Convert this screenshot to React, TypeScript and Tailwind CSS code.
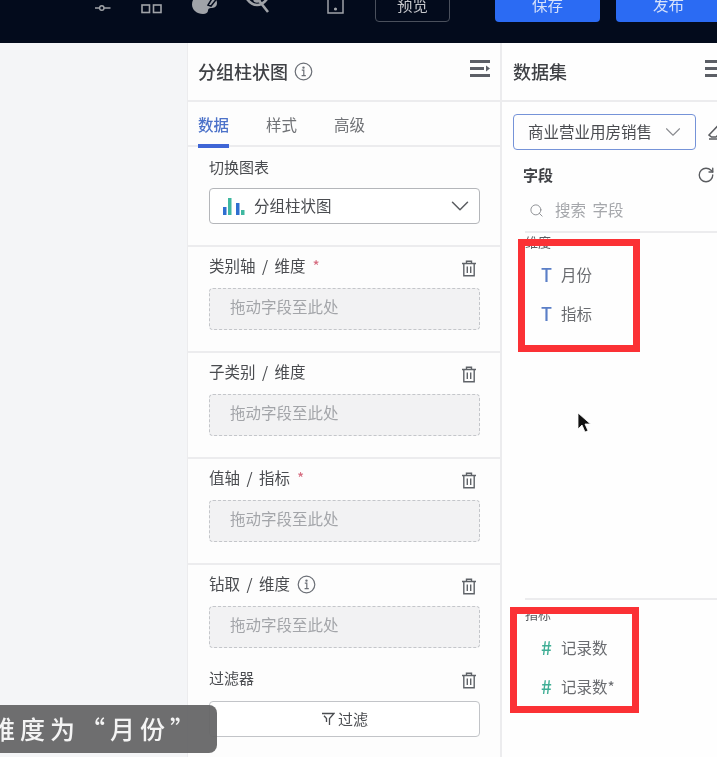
import { ChevronDown, RotateCw, Search } from "lucide-react"

function InfoIcon() {
  return (
    <svg width="19" height="19" viewBox="0 0 19 19" fill="none" stroke="#6b6f76" strokeWidth="1.2">
      <circle cx="9.5" cy="9.5" r="8.3" />
      <path d="M7.8 8.2h2v5.4M7.6 13.6h4.2" />
      <circle cx="9.5" cy="5.6" r="0.6" fill="#6b6f76" />
    </svg>
  )
}

function TrashIcon() {
  return (
    <svg className="mt-[4px]" width="16" height="17" viewBox="0 0 16 17" fill="none" stroke="#5f6368" strokeWidth="1.4">
      <path d="M1 3.5h14M5.5 3.5V1.2h5v2.3M2.8 3.5v12.3h10.4V3.5M6.3 6.5v6.5M9.7 6.5v6.5" />
    </svg>
  )
}

function CollapseIcon() {
  return (
    <svg width="21" height="18" viewBox="0 0 21 18" fill="#5c5f66" className="shrink-0">
      <rect x="0" y="0" width="20" height="3" />
      <rect x="0" y="7" width="14" height="3" />
      <path d="M16 5.5l4 3-4 3z" />
      <rect x="0" y="14" width="20" height="3" />
    </svg>
  )
}

function DropZone() {
  return (
    <div className="flex h-[42px] items-center rounded border border-dashed border-[#c4c6ca] bg-[#f2f2f3] pb-[4px] pl-5 text-[15.5px] text-[#a3a5a9]">
      拖动字段至此处
    </div>
  )
}

function SlotSection({ label, extra, last }: { label: string; extra?: React.ReactNode; last?: boolean }) {
  return (
    <section
      className={
        last
          ? "h-[99px] pl-[21px] pr-[20px] pt-[6px]"
          : "h-[106px] border-b-2 border-[#ececee] pl-[21px] pr-[20px] pt-[6px]"
      }
    >
      <div className="mb-[9px] flex h-[26px] items-center justify-between pr-[3px] text-[15.5px] text-[#4a4c50] [word-spacing:3px]">
        <div className="flex items-center gap-[7px]">
          <span>{label}</span>
          {extra}
        </div>
        <TrashIcon />
      </div>
      <DropZone />
    </section>
  )
}

const star = <span className="text-[#d56a7e]">*</span>

function FieldRow({ kind, name }: { kind: "T" | "#"; name: string }) {
  return (
    <div className="flex h-[39px] items-center gap-[8px] pl-[15px] text-[15.5px] text-[#6a6c70]">
      <span
        className={
          kind === "T"
            ? "w-[13px] text-center text-[18px] font-medium text-[#5b7fc7]"
            : "w-[13px] text-center text-[19px] font-medium text-[#3fae95]"
        }
      >
        {kind}
      </span>
      <span>{name}</span>
    </div>
  )
}

export default function App() {
  return (
    <div
      className="relative h-[757px] w-[717px] overflow-hidden bg-white text-[#3f4145] blur-[0.5px]"
      style={{ fontFamily: '"Noto Sans CJK SC", "Noto Sans", sans-serif' }}
    >
      {/* top bar, the frame cuts it off at the top */}
      <header className="flex h-[43px] items-start overflow-hidden bg-[#030b1c]">
        <div className="ml-[95px] mt-[-6px] flex items-end text-[#a0a3a8]">
          <svg width="16" height="18" viewBox="0 0 16 18" fill="none" stroke="currentColor" strokeWidth="1.4">
            <path d="M0 12h4.5M9 12h6.5" />
            <circle cx="6.8" cy="12" r="2.2" />
          </svg>
          <svg className="ml-[30px]" width="22" height="18" viewBox="0 0 22 18" fill="none" stroke="currentColor" strokeWidth="1.6">
            <rect x="1" y="9" width="7.5" height="7.5" />
            <rect x="12.5" y="9" width="7.5" height="7.5" />
          </svg>
          <svg className="ml-[29px]" width="28" height="19" viewBox="0 0 28 19" fill="currentColor">
            <path d="M12 0c8 0 13 3 13 8 0 4-3 5-6 5-2 0-3 1-3 2.400 0 2-2 3.600-5 3.600C5 19 0 15 0 9.500 0 3 5 0 12 0z" />
            <path d="M21 2l6-3v2l-8 10-3-1z" stroke="#030b1c" strokeWidth="1.500" />
          </svg>
          <svg className="ml-[26px]" width="24" height="20" viewBox="0 0 24 20" fill="none" stroke="currentColor" strokeWidth="2.600">
            <path d="M1 5c3-4 6-6 10-6s7 3 10 6c-3 4-6 6-10 6S4 9 1 5z" />
            <circle cx="11" cy="5" r="2.500" fill="currentColor" />
            <path d="M7-1l15 19" />
          </svg>
          <svg className="ml-[57px]" width="17" height="18" viewBox="0 0 17 18" fill="none" stroke="currentColor" strokeWidth="1.500">
            <path d="M1 0v17h15V0" />
            <circle cx="8.500" cy="13" r="0.800" fill="currentColor" />
          </svg>
        </div>
        <div className="ml-[31px] mt-[-13px] flex">
          <button className="flex h-[35px] w-[75px] items-center justify-center rounded border border-[#4a505c] pt-[1px] text-[15.5px] text-[#c6c8cc]">
            预览
          </button>
          <button className="ml-[45px] flex h-[35px] w-[105px] items-center justify-center rounded bg-[#2b6bf3] pt-[1px] text-[15.5px] text-[#d5e1fb]">
            保存
          </button>
          <button className="ml-[16px] flex h-[35px] w-[105px] items-center justify-center rounded bg-[#2b6bf3] pt-[1px] text-[15.5px] text-[#d5e1fb]">
            发布
          </button>
        </div>
      </header>

      <div className="flex h-[714px]">
        <div className="w-[187px] shrink-0 bg-[#f4f5f7]" />

        {/* chart config */}
        <aside className="w-[315px] shrink-0 border-l border-r-2 border-[#ececee] bg-[#fdfdfd]">
          <div className="flex h-[59px] items-center justify-between border-b-2 border-[#ececee] pl-[10px] pr-[9px]">
            <div className="flex items-center gap-[6px] text-[18px] font-medium text-[#3f4145]">
              分组柱状图
              <InfoIcon />
            </div>
            <div className="mb-[5px]">
              <CollapseIcon />
            </div>
          </div>
          <div className="flex h-[45px] items-start gap-[37px] border-b-2 border-[#ececee] pl-[10px] pt-[11px] text-[15.5px] text-[#707276]">
            <span className="relative h-[34px] font-medium text-[#4c72c9]">
              数据
              <span className="absolute bottom-[-1px] left-0 h-[4px] w-full bg-[#3f66d6]" />
            </span>
            <span>样式</span>
            <span>高级</span>
          </div>

          <section className="h-[100px] border-b-2 border-[#ececee] pl-[21px] pr-[20px] pt-[8px]">
            <div className="mb-[9px] text-[15px] leading-[24px] text-[#4a4c50]">切换图表</div>
            <div className="flex h-[36px] items-center justify-between rounded border border-[#b4b6ba] bg-white pl-[12px] pr-[4px] text-[15.5px] text-[#4a4c50]">
              <div className="flex items-center gap-[8px]">
                <svg width="24" height="18" viewBox="0 0 24 18">
                  <rect x="1" y="10" width="3.500" height="8" fill="#2f6fd0" />
                  <rect x="6" y="1" width="3.500" height="17" fill="#3fb8a0" />
                  <rect x="14" y="6" width="3.500" height="12" fill="#2f6fd0" />
                  <rect x="19" y="13" width="3.500" height="5" fill="#3fb8a0" />
                </svg>
                分组柱状图
              </div>
              <ChevronDown size={30} strokeWidth={1.2} color="#5a5c60" />
            </div>
          </section>

          <SlotSection label="类别轴 / 维度" extra={star} />
          <SlotSection label="子类别 / 维度" />
          <SlotSection label="值轴 / 指标" extra={star} />
          <SlotSection label="钻取 / 维度" extra={<InfoIcon />} last />

          <section className="pl-[21px] pr-[20px] pt-[1px]">
            <div className="mb-[10px] flex h-[26px] items-center justify-between pr-[3px] text-[15px] text-[#4a4c50]">
              过滤器
              <TrashIcon />
            </div>
            <button className="flex h-[36px] w-full items-center justify-center gap-[3px] rounded border border-[#c2c4c8] bg-white text-[15px] text-[#4a4c50]">
              <svg width="14" height="14" viewBox="0 0 14 14" fill="none" stroke="#4a4c50" strokeWidth="1.300">
                <path d="M1 1.500h12L8.500 6.500v6.500M5.500 10V6.500L3 3.800" />
              </svg>
              过滤
            </button>
          </section>
        </aside>

        {/* dataset panel */}
        <aside className="min-w-0 flex-1 overflow-hidden bg-[#fefefe]">
          <div className="flex h-[59px] w-[215px] items-center justify-between border-b-2 border-[#ececee] pl-[11px]">
            <span className="text-[18px] font-medium text-[#3f4145]">数据集</span>
            <div className="mb-[5px] w-[12px] overflow-hidden">
              <CollapseIcon />
            </div>
          </div>
          <div className="mt-[12px] flex items-center pl-[11px]">
            <div className="flex h-[36px] w-[183px] shrink-0 items-center justify-between rounded border-[1.5px] border-[#7593d8] pl-[14px] pr-[9px] text-[15.5px] whitespace-nowrap text-[#4a4c50]">
              商业营业用房销售
              <ChevronDown className="shrink-0" size={26} strokeWidth={1} color="#8a8c90" />
            </div>
            <svg className="ml-[12px] shrink-0" width="16" height="16" viewBox="0 0 16 16" fill="none" stroke="#5a5c60" strokeWidth="1.500">
              <path d="M1 11L10 1.500l5 4.500-7 7H3.500zM1 15h14" />
            </svg>
          </div>
          <div className="mt-[12px] flex h-[26px] items-center justify-between pl-[21px] pr-[2px]">
            <span className="text-[15px] font-semibold text-[#3f4145]">字段</span>
            <RotateCw size={18} strokeWidth={1.800} color="#5a5c60" />
          </div>
          <div className="mt-[11px] ml-[23px] flex h-[34px] items-center gap-[11px] border-b-2 border-[#ececee] pb-[11px] pl-[4px] pt-[1px] text-[15.5px] text-[#a5a7ab] [word-spacing:3px]">
            <Search size={15} strokeWidth={1.500} color="#8b8d91" />
            搜索 字段
          </div>
          <div className="ml-[23px] h-[365px] pt-[3px]">
            <div className="text-[13px] leading-[12px] text-[#5a5c60]">维度</div>
            <div className="mt-[7px]">
              <FieldRow kind="T" name="月份" />
              <FieldRow kind="T" name="指标" />
            </div>
          </div>
          <div className="ml-[23px] border-t-2 border-[#ececee] pt-[7px]">
            <div className="text-[13px] leading-[14px] text-[#5a5c60]">指标</div>
            <div className="mt-[7px]">
              <FieldRow kind="#" name="记录数" />
              <FieldRow kind="#" name="记录数*" />
            </div>
          </div>
        </aside>
      </div>

      {/* video annotations on top of the page */}
      <div className="absolute left-[518px] top-[239px] h-[113px] w-[122px] border-[7px] border-[#fb3135]" />
      <div className="absolute left-[510px] top-[607px] h-[106px] w-[129px] border-[7px] border-[#fb3135]" />
      <svg className="absolute left-[577px] top-[412px]" width="14" height="22" viewBox="0 0 14 22">
        <path d="M1 1v16l4-4 3 7 3-1.200-3-6.800h5.500z" fill="#111" stroke="#fff" strokeWidth="0.800" />
      </svg>
      <div className="absolute left-0 top-[705px] flex h-[48px] w-[217px] items-center justify-end overflow-hidden rounded-r-lg bg-[#666667]/95 pr-[17px] text-[25px] font-medium tracking-[5px] whitespace-nowrap text-[#f4f4f4]">
        维度为“月份”
      </div>
    </div>
  )
}
